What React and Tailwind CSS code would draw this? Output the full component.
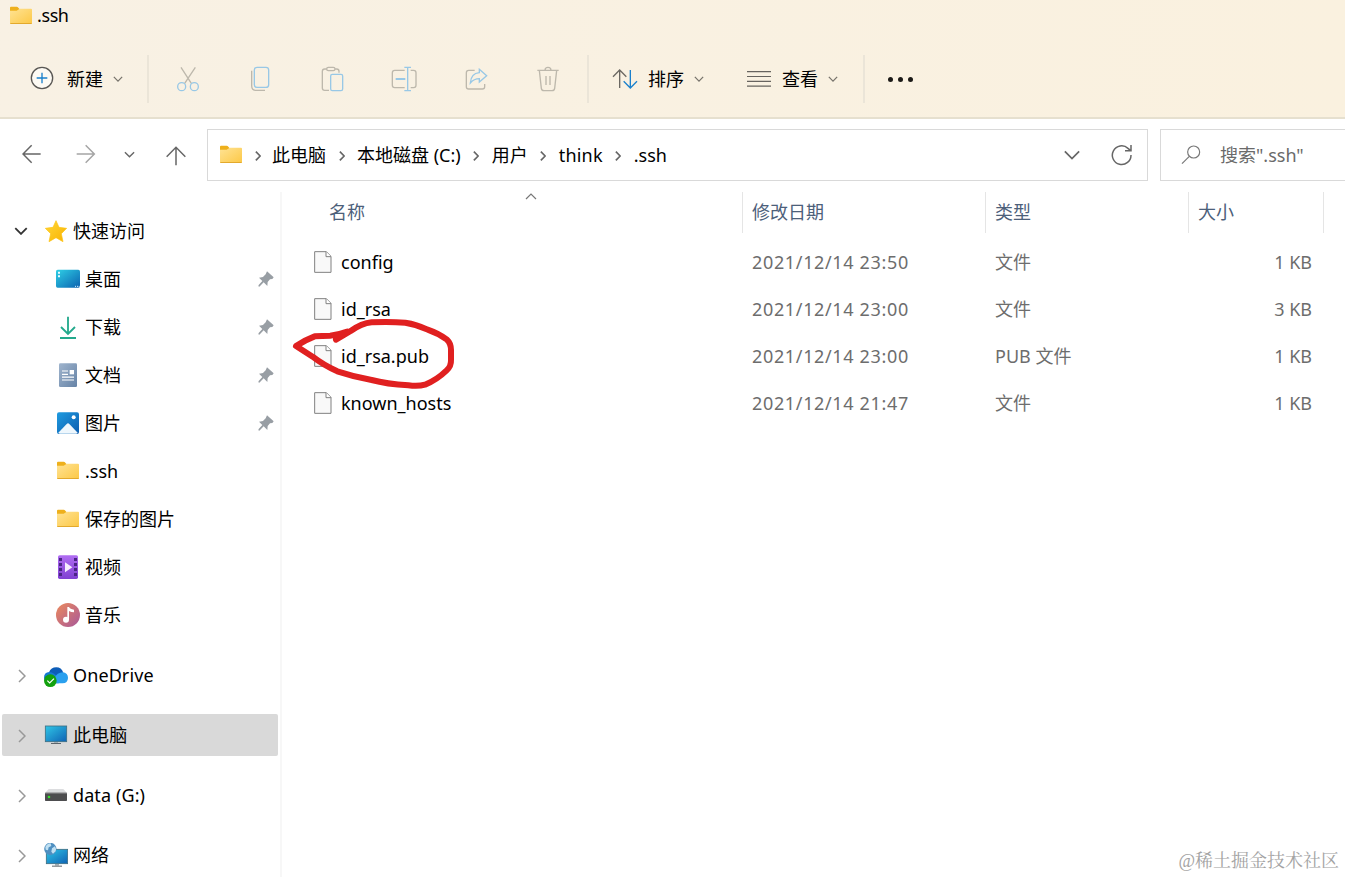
import React from 'react';

const FolderIcon = () => (
  <svg viewBox="0 0 72 72" className="w-6 h-6 shrink-0">
    <defs>
      <linearGradient id="folder" x1="0" y1="0" x2="1" y2="1">
        <stop offset="0" stopColor="#ffe394" />
        <stop offset="1" stopColor="#fcc846" />
      </linearGradient>
    </defs>
    <path d="M3 11q0-3 3-3h17q3 0 5 3l4 5v10H3z" fill="#eeb01c" />
    <path d="M3 20h20l9-6h34q3 0 3 3v40q0 3-3 3H6q-3 0-3-3z" fill="url(#folder)" />
    <path d="M4 58.500h64" stroke="#e3a92c" strokeWidth="3" />
  </svg>
);

const DesktopIcon = () => (
  <svg viewBox="0 0 72 72" className="w-6 h-6 shrink-0">
    <defs>
      <linearGradient id="desktop" x1="0" y1="0" x2="1" y2="1">
        <stop offset="0" stopColor="#2fd0e6" />
        <stop offset="1" stopColor="#0b62b0" />
      </linearGradient>
    </defs>
    <rect y="8" width="72" height="54" rx="5" fill="url(#desktop)" />
    <path d="M6 14h6v6H6zM6 25h6v6H6z" fill="#e8fbff" />
    <path d="M57 58h3M63 58h3M68 58h3" stroke="#d8f0ff" strokeWidth="3" />
  </svg>
);

const DownloadIcon = () => (
  <svg viewBox="0 0 72 72" className="w-6 h-6 shrink-0" fill="none" stroke="#23a98c" strokeWidth="5.500">
    <path d="M36 5v52M15 36l21 21 21-21M12 69h48" />
  </svg>
);

const DocumentIcon = () => (
  <svg viewBox="0 0 72 72" className="w-6 h-6 shrink-0">
    <defs>
      <linearGradient id="document" x1="0" y1="0" x2="1" y2="1">
        <stop offset="0" stopColor="#9fb4cd" />
        <stop offset="1" stopColor="#6683a6" />
      </linearGradient>
    </defs>
    <rect x="9" y="1" width="54" height="71" rx="4" fill="url(#document)" />
    <path d="M18 24h18M18 34h18M18 42.500h36M18 51h36" stroke="#fff" strokeWidth="3.500" />
    <rect x="41" y="21" width="13" height="13" fill="#fff" />
  </svg>
);

const PictureIcon = () => (
  <svg viewBox="0 0 72 72" className="w-6 h-6 shrink-0">
    <defs>
      <linearGradient id="picture" x1="0" y1="0" x2="1" y2="1">
        <stop offset="0" stopColor="#1f9be0" />
        <stop offset="1" stopColor="#0c5cae" />
      </linearGradient>
    </defs>
    <rect x="3" y="4" width="66" height="65" rx="6" fill="url(#picture)" />
    <path d="M7 65l25-26q4-4 8 0l25 26q-2 3-5 3H12q-3 0-5-3z" fill="#eef7fd" />
    <circle cx="53" cy="19" r="6" fill="#fff" />
  </svg>
);

const VideoIcon = () => (
  <svg viewBox="0 0 72 72" className="w-6 h-6 shrink-0">
    <defs>
      <linearGradient id="video" x1="0" y1="0" x2="0" y2="1">
        <stop offset="0" stopColor="#b06df2" />
        <stop offset="1" stopColor="#8040d2" />
      </linearGradient>
    </defs>
    <rect x="6" y="1" width="60" height="71" rx="5" fill="url(#video)" />
    <path
      d="M9 9h9v9H9zM9 24h9v9H9zM9 39h9v9H9zM9 54h9v9H9zM54 9h9v9h-9zM54 24h9v9h-9zM54 39h9v9h-9zM54 54h9v9h-9z"
      fill="#4a2585"
    />
    <path d="M27 22v30l22-15z" fill="#f6eefe" />
  </svg>
);

const MusicIcon = () => (
  <svg viewBox="0 0 72 72" className="w-6 h-6 shrink-0">
    <defs>
      <linearGradient id="music" x1="0" y1="0" x2="1" y2="1">
        <stop offset="0" stopColor="#ec8a5c" />
        <stop offset="1" stopColor="#a8589a" />
      </linearGradient>
    </defs>
    <circle cx="36" cy="36" r="36" fill="url(#music)" />
    <circle cx="30" cy="50" r="9" fill="#fff" />
    <path d="M34 50V12h5q3 7 15 8v8q-9 0-15-4v26z" fill="#fff" />
  </svg>
);

const StarIcon = () => (
  <svg viewBox="0 0 72 72" className="w-6 h-6 shrink-0">
    <defs>
      <linearGradient id="star" x1="0" y1="0" x2="1" y2="1">
        <stop offset="0" stopColor="#ffd83a" />
        <stop offset="1" stopColor="#f9b200" />
      </linearGradient>
    </defs>
    <path
      d="M36 5l9 20 23 3-16 16 5 24-21-12-21 12 5-24L4 28l23-3z"
      fill="url(#star)"
      stroke="#fdc20f"
      strokeWidth="2"
      strokeLinejoin="round"
    />
  </svg>
);

const OneDriveIcon = () => (
  <svg viewBox="0 0 72 72" className="w-6 h-6 shrink-0">
    <path d="M15 28q6-15 22-15 15 0 21 16L40 46 12 34z" fill="#0d5db8" />
    <path d="M0 44q0-16 16-17 8 0 14 5l22 17-8 12H16Q0 60 0 44z" fill="#1679d2" />
    <path d="M30 46q10-18 26-18 16 2 16 17-1 16-16 16H26z" fill="#2aa0ee" />
    <circle cx="19" cy="53" r="19" fill="#13a10e" />
    <path d="M10 53l7 7 13-13" stroke="#fff" strokeWidth="3.500" fill="none" />
  </svg>
);

const ComputerIcon = () => (
  <svg viewBox="0 0 72 72" className="w-6 h-6 shrink-0">
    <defs>
      <linearGradient id="screen" x1="0" y1="0" x2="1" y2="1">
        <stop offset="0" stopColor="#2fc6e6" />
        <stop offset="1" stopColor="#0f62b4" />
      </linearGradient>
    </defs>
    <path d="M30 56h12v5H30z" fill="#a9b2b8" />
    <path d="M21 61.500h30" stroke="#5d656b" strokeWidth="3" />
    <rect x="4" y="9" width="64" height="47" fill="url(#screen)" stroke="#3e6f83" strokeWidth="2.500" />
  </svg>
);

const DriveIcon = () => (
  <svg viewBox="0 0 72 72" className="w-6 h-6 shrink-0">
    <path d="M14 18h44l11 12H3z" fill="#dcdddf" />
    <rect x="3" y="29" width="66" height="25" rx="2" fill="#4d4d4f" />
    <path d="M3 31h66" stroke="#77787a" strokeWidth="3" />
    <circle cx="15" cy="42" r="4" fill="#35e02c" />
  </svg>
);

const NetworkIcon = () => (
  <svg viewBox="0 0 72 72" className="w-6 h-6 shrink-0">
    <path d="M33 63h12v5H33z" fill="#a9b2b8" />
    <path d="M24 69.500h30" stroke="#5d656b" strokeWidth="3" />
    <rect x="7" y="19" width="64" height="43" fill="url(#screen)" stroke="#3e6f83" strokeWidth="2.500" />
    <circle cx="19" cy="18" r="18.500" fill="#4f8fc0" />
    <path d="M4 12Q9 2 20 1l2 8-8 4-2 9-7-2zM24 16l9-6q5 8 2 15l-8 7-5-6z" fill="#bfe0f2" />
  </svg>
);

const PinIcon = () => (
  <svg viewBox="0 0 48 48" className="w-4 h-4 ml-auto mr-[6px]">
    <path d="M27 1l20 18-4 5-7 1-7 8-1 12-11-11L4 47l-3-1 1-4 11-12L3 20l12-2 8-8z" fill="#989ea4" />
  </svg>
);

const Chevron = ({ className, width = 1.2 }) => (
  <svg viewBox="0 0 12 7" className={className} fill="none" stroke="currentColor" strokeWidth={width}>
    <path d="M1 1l5 5 5-5" />
  </svg>
);

const ChevronRight = ({ className, width = 1.5 }) => (
  <svg viewBox="0 0 8 14" className={className} fill="none" stroke="currentColor" strokeWidth={width}>
    <path d="M1 1l6 6-6 6" />
  </svg>
);

const FileIcon = () => (
  <svg viewBox="0 0 54 66" className="w-[18px] h-[22px] shrink-0" fill="#f9f9f9" stroke="#808080" strokeWidth="3">
    <path d="M2 2h35l14 14v48H2z" />
    <path d="M36 2v15h15" fill="#fff" />
  </svg>
);

// Two-tone command bar icons: grey outline, blue accent
const tools = [
  {
    name: 'cut',
    grey: 'M21 7l31 48M64 7L32 55',
    blue: 'M35 65a12 12 0 1 1-24 0a12 12 0 1 1 24 0M73 65a12 12 0 1 1-24 0a12 12 0 1 1 24 0',
  },
  {
    name: 'copy',
    grey: 'M17 17v45q0 14 14 14h26',
    blue: 'M33 7h27q8 0 8 8v44q0 8-8 8H33q-8 0-8-8V15q0-8 8-8z',
  },
  {
    name: 'paste',
    grey: 'M26 12h-6q-7 0-7 7v50q0 7 7 7h13M52 12h4q7 0 7 7v4M31 7h15q5 0 5 5t-5 5H31q-5 0-5-5t5-5z',
    blue: 'M43 28h26q5 0 5 5v39q0 5-5 5H43q-5 0-5-5V33q0-5 5-5z',
  },
  {
    name: 'rename',
    grey: 'M44 16H14q-7 0-7 7v38q0 7 7 7h30M62 16h9q7 0 7 7v38q0 7-7 7h-9',
    blue: 'M53 7v70M43 7h20M43 77h20M17 41h29M17 43h29',
  },
  {
    name: 'share',
    grey: 'M38 16H20q-7 0-7 7v42q0 7 7 7h41q7 0 7-7v-8',
    blue: 'M52 13l22 19-22 19V41q-16 0-27 13 2-29 27-31z',
  },
  {
    name: 'delete',
    grey: 'M10 16h64M16 16l6 54q1 7 8 7h24q7 0 8-7l6-54M33 16q0-9 9-9t9 9M36 33v27M48 33v27',
    blue: '',
  },
];

const quickAccess = [
  { label: '桌面', icon: <DesktopIcon />, pinned: true },
  { label: '下载', icon: <DownloadIcon />, pinned: true },
  { label: '文档', icon: <DocumentIcon />, pinned: true },
  { label: '图片', icon: <PictureIcon />, pinned: true },
  { label: '.ssh', icon: <FolderIcon /> },
  { label: '保存的图片', icon: <FolderIcon /> },
  { label: '视频', icon: <VideoIcon /> },
  { label: '音乐', icon: <MusicIcon /> },
];

const locations = [
  { label: 'OneDrive', icon: <OneDriveIcon /> },
  { label: '此电脑', icon: <ComputerIcon />, active: true },
  { label: 'data (G:)', icon: <DriveIcon /> },
  { label: '网络', icon: <NetworkIcon /> },
];

const files = [
  { name: 'config', date: '2021/12/14 23:50', type: '文件', size: '1 KB' },
  { name: 'id_rsa', date: '2021/12/14 23:00', type: '文件', size: '3 KB' },
  { name: 'id_rsa.pub', date: '2021/12/14 23:00', type: 'PUB 文件', size: '1 KB' },
  { name: 'known_hosts', date: '2021/12/14 21:47', type: '文件', size: '1 KB' },
];

const crumbs = ['此电脑', '本地磁盘 (C:)', '用户', 'think', '.ssh'];

const Divider = () => <div className="w-[2px] h-12 bg-[#ebe5d8]" />;

const CommandBar = () => (
  <div className="mt-[9px] h-[76px] flex items-center">
    <div className="w-[147px] pl-7 flex items-center">
      <svg viewBox="0 0 84 84" className="w-7 h-7 relative -top-px" fill="none" strokeWidth="4">
        <circle cx="42" cy="42" r="32" fill="#fdfaf3" stroke="#595754" />
        <path d="M42 26v32M26 42h32" stroke="#1a80cc" />
      </svg>
      <span className="ml-[11px] w-[46px]">新建</span>
      <Chevron className="w-[10px] h-[6px] text-[#77736b]" width={1.5} />
    </div>
    <Divider />
    <div className="w-[438px] pl-[3px] flex">
      {tools.map((tool) => (
        <div key={tool.name} className="w-[72px] flex justify-center">
          <svg viewBox="0 0 84 84" className="w-7 h-7" fill="none" strokeWidth="4">
            <path d={tool.grey} stroke="#bdb8ac" />
            <path d={tool.blue} stroke="#98c8e6" />
          </svg>
        </div>
      ))}
    </div>
    <Divider />
    <div className="w-[274px] pl-[22px] flex items-center">
      <svg viewBox="0 0 84 84" className="w-7 h-7" fill="none" strokeWidth="4">
        <path d="M26 69V15M6 35l20-20 20 20" stroke="#6b6862" />
        <path d="M58 15v54M38 49l20 20 20-20" stroke="#1a80cc" />
      </svg>
      <span className="ml-[9px] w-[46px]">排序</span>
      <Chevron className="w-[10px] h-[6px] text-[#77736b]" width={1.5} />
      <svg viewBox="0 0 84 84" className="w-7 h-7 ml-[41px]" fill="none" stroke="#67645f" strokeWidth="3.500">
        <path d="M6 20h72M6 34.500h72M6 49h72M6 63.500h72" />
      </svg>
      <span className="ml-[9px] w-[46px]">查看</span>
      <Chevron className="w-[10px] h-[6px] text-[#77736b]" width={1.5} />
    </div>
    <Divider />
    <div className="ml-[23px] mt-px flex gap-[5px]">
      <div className="w-[5px] h-[5px] rounded-full bg-[#1c1a17]" />
      <div className="w-[5px] h-[5px] rounded-full bg-[#1c1a17]" />
      <div className="w-[5px] h-[5px] rounded-full bg-[#1c1a17]" />
    </div>
  </div>
);

const AddressBar = () => (
  <div className="pt-[10px] flex shrink-0 h-[62px]">
    <div className="w-[207px] pl-[22px] pb-[2px] flex items-center">
      <svg viewBox="0 0 60 60" className="w-5 h-5" fill="none" stroke="#666" strokeWidth="4.500">
        <path d="M56 30H3M29 4L3 30l26 26" />
      </svg>
      <svg viewBox="0 0 60 60" className="w-5 h-5 ml-[34px]" fill="none" stroke="#a5a5a5" strokeWidth="4.500">
        <path d="M2 30h53M29 4l26 26-26 26" />
      </svg>
      <Chevron className="w-[11px] h-[7px] ml-[28px] text-[#666]" width={1.5} />
      <svg viewBox="0 0 60 60" className="w-5 h-5 ml-[31px] mt-[3px]" fill="none" stroke="#666" strokeWidth="4.500">
        <path d="M30 58V4M2 32L30 4l28 28" />
      </svg>
    </div>
    <div className="w-[941px] pl-[11px] pb-px border border-[#d9d9d9] flex items-center">
      <FolderIcon />
      {crumbs.map((crumb) => (
        <React.Fragment key={crumb}>
          <span className="w-[31px] first-of-type:w-[29px] flex justify-center text-[#666]">
            <ChevronRight className="w-[6px] h-[10px] mt-[2px]" width={2.4} />
          </span>
          <div className={crumb === 'think' ? 'tracking-[0.200px]' : ''}>{crumb}</div>
        </React.Fragment>
      ))}
      <Chevron className="w-[18px] h-[10px] ml-auto mr-[30px] text-[#666]" />
      <svg viewBox="0 0 66 66" className="w-[22px] h-[22px] mr-[14px]" fill="none" stroke="#666" strokeWidth="4.500">
        <path d="M60 33A28 28 0 1 1 51 13L59 20M60 3v17H42" />
      </svg>
    </div>
    <div className="ml-3 flex-grow pl-5 border border-r-0 border-[#d9d9d9] flex items-center text-[#6a6a6a]">
      <svg viewBox="0 0 60 60" className="w-5 h-5" fill="none" stroke="#777" strokeWidth="3.500">
        <circle cx="38" cy="21" r="18" />
        <path d="M25 34L3 56" />
      </svg>
      <span className="ml-[19px]">搜索".ssh"</span>
    </div>
  </div>
);

const Sidebar = () => (
  <div className="w-[280px] pt-[26px] shrink-0">
    <div className="h-12 pl-[14px] flex items-center">
      <Chevron className="w-[14px] h-[8px] text-[#333]" width={1.6} />
      <span className="ml-[16px] flex items-center gap-[5px]">
        <StarIcon />
        快速访问
      </span>
    </div>
    {quickAccess.map((item) => (
      <div key={item.label} className="h-12 pl-14 flex items-center gap-[5px]">
        {item.icon}
        {item.label}
        {item.pinned && <PinIcon />}
      </div>
    ))}
    <div className="mt-[6px]">
      {locations.map((item) => (
        <div key={item.label} className="h-[60px] flex items-center">
          <div
            className={`ml-[2px] w-[276px] h-[42px] pl-[16px] flex items-center rounded-[2px] ${
              item.active ? 'bg-[#d9d9d9]' : ''
            }`}
          >
            <ChevronRight className="w-[8px] h-[14px] mt-[2px] text-[#999]" />
            <span className="ml-[18px] flex items-center gap-[5px] tracking-[0.100px]">
              {item.icon}
              {item.label}
            </span>
          </div>
        </div>
      ))}
    </div>
  </div>
);

const FileList = () => (
  <div className="relative mt-[11px] flex-grow border-l-2 border-[#f7f7f7]">
    <div className="grid grid-cols-[460px_243px_203px_136px] h-[41px] leading-[41px] text-[#4c607a]">
      <div className="pl-[47px]">名称</div>
      <div className="border-l border-[#e5e5e5] pl-[9px]">修改日期</div>
      <div className="border-l border-[#e5e5e5] pl-[9px]">类型</div>
      <div className="border-x border-[#e5e5e5] pl-[9px]">大小</div>
    </div>
    {/* Sort direction marker above the name column */}
    <Chevron className="absolute left-[243px] top-[1px] w-[12px] h-[7px] rotate-180 text-[#777]" />

    <div className="mt-[5px]">
      {files.map((file) => (
        <div key={file.name} className="grid grid-cols-[460px_243px_203px_124px] h-[47px] items-center text-[#6d6d6d]">
          <div className="pl-[32px] flex items-center gap-[9px] text-black">
            <FileIcon />
            {file.name}
          </div>
          <div className="pl-[10px] tracking-[0.650px]">{file.date}</div>
          <div className="pl-[10px]">{file.type}</div>
          <div className="text-right">{file.size}</div>
        </div>
      ))}
    </div>

    {/* Hand-drawn circle around the public key */}
    <svg
      viewBox="0 0 600 570"
      className="absolute left-[-2px] top-[48px] w-[200px] h-[190px]"
      fill="none"
      stroke="#e02020"
      strokeWidth="18"
      strokeLinecap="round"
      strokeLinejoin="round"
    >
      <path d="M168 299L212 273Q245 250 275 247Q330 245 376 248Q410 253 443 269Q475 280 501 299Q513 310 513 330V360Q514 378 500 391Q470 420 435 434Q415 440 385 436Q320 432 275 420Q220 410 172 394Q130 375 98 350L48 318Q75 300 104 289L150 287Q175 285 202 275L170 291" />
    </svg>
  </div>
);

const App = () => {
  return (
    <div className="relative h-[877px] w-full overflow-hidden bg-white flex flex-col text-[18px] leading-6 text-black font-['Noto_Sans','Noto_Sans_CJK_SC',sans-serif]">
      {/* Title and command bar */}
      <div className="h-[119px] shrink-0 border-b-2 border-[#e6e0cf] bg-linear-to-r from-[#f8f1e4] to-[#faf1df]">
        <div className="h-8 pl-[9px] flex items-center gap-1">
          <FolderIcon />
          <span className="relative -top-px tracking-[-0.400px]">.ssh</span>
        </div>
        <CommandBar />
      </div>

      <AddressBar />

      <div className="flex flex-grow min-h-0">
        <Sidebar />
        <FileList />
      </div>

      <div className="absolute right-[6px] bottom-[4px] text-[#a3a3a3] font-['Liberation_Serif','Noto_Serif_CJK_SC','Noto_Sans_CJK_SC',serif]">
        @稀土掘金技术社区
      </div>
    </div>
  );
};

export default App;
